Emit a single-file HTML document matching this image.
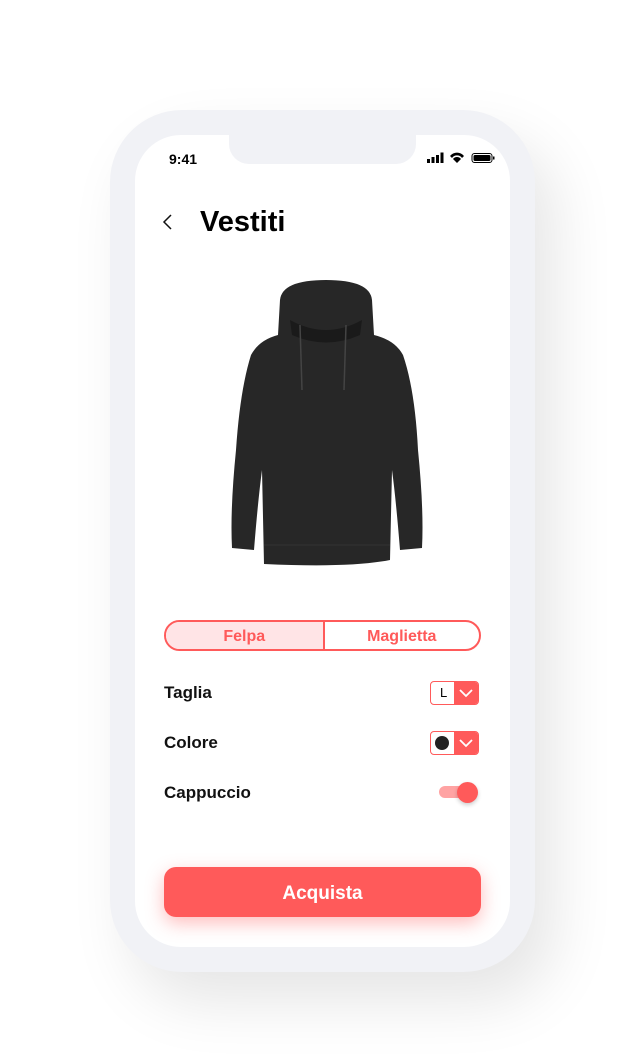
<!DOCTYPE html>
<html><head><style>
body{margin:0;width:625px;height:1062px;background:#fff;position:relative;overflow:hidden;font-family:"Liberation Sans",sans-serif}
.outer{position:absolute;left:110px;top:110px;width:425px;height:862px;border-radius:72px;background:#f1f2f6;box-shadow:20px 30px 60px rgba(0,0,0,0.10)}
.screen{position:absolute;left:135px;top:135px;width:375px;height:812px;border-radius:46px;background:#fff;overflow:hidden}
.notch{position:absolute;left:94px;top:0;width:187px;height:29px;background:#f1f2f6;border-radius:0 0 20px 20px}
.abs{position:absolute}
.lbl{position:absolute;left:29px;font-weight:bold;font-size:17px;color:#111}
.sel{position:absolute;left:295px;width:49px;height:24px;border:1.5px solid #ff5a5a;border-radius:4px;box-sizing:border-box;overflow:hidden}
.sel .r{position:absolute;right:0;top:0;width:24px;height:100%;background:#ff5a5a}
</style></head><body>
<div class="outer"></div>
<div class="screen">
<div class="notch"></div>
<div class="abs" style="left:34px;top:16px;font-size:14px;font-weight:bold">9:41</div>
<svg class="abs" style="left:292px;top:17px" width="70" height="12">
<rect x="0" y="7" width="3" height="4" fill="#000"/><rect x="4.5" y="5" width="3" height="6" fill="#000"/><rect x="9" y="3" width="3" height="8" fill="#000"/><rect x="13.5" y="0.5" width="3" height="10.5" fill="#000"/>
<path d="M23 4 A9 9 0 0 1 37 4 L35 6 A6 6 0 0 0 25 6Z M26 7 A5 5 0 0 1 34 7 L30 11Z" fill="#000"/>
<rect x="45" y="1.5" width="20" height="9" rx="2.5" fill="none" stroke="#000" stroke-width="1"/><rect x="46.5" y="3" width="17" height="6" rx="1.5" fill="#000"/><rect x="66" y="4.5" width="1.5" height="3" fill="#000"/>
</svg>
<svg class="abs" style="left:27px;top:78px" width="12" height="18"><path d="M9 2 L2 9 L9 16" fill="none" stroke="#111" stroke-width="1.5"/></svg>
<div class="abs" style="left:65px;top:71px;font-size:29px;font-weight:bold;color:#000">Vestiti</div>
<svg class="abs" style="left:85px;top:145px" width="214" height="290" viewBox="0 0 214 290" preserveAspectRatio="none">
<path d="M60 20 Q62 0 106 0 Q150 0 152 20 L154 55 Q175 60 183 75 Q195 110 198 170 Q204 230 202 268 L180 270 Q176 220 172 190 L170 280 Q130 288 44 284 L42 190 Q38 220 34 270 L12 268 Q10 230 16 170 Q20 110 31 75 Q39 60 58 55Z" fill="#272727"/>
<path d="M70 40 Q106 60 142 40 L140 55 Q106 70 72 55Z" fill="#1a1a1a"/>
<path d="M80 45 L82 110 M126 45 L124 110" stroke="#444" stroke-width="1.5"/>
<path d="M44 265 L170 265" stroke="#333" stroke-width="1"/>
</svg>
<div class="abs" style="left:29px;top:485px;width:317px;height:31px;border:2.5px solid #ff5a5a;border-radius:16px;box-sizing:border-box;overflow:hidden;display:flex;font-weight:bold;font-size:16px;color:#ff5a5a">
<div style="width:50%;background:#ffe4e6;border-right:2.5px solid #ff5a5a;text-align:center;line-height:29px">Felpa</div>
<div style="flex:1;text-align:center;line-height:29px">Maglietta</div></div>
<div class="lbl" style="top:548px">Taglia</div>
<div class="sel" style="top:546px"><span class="abs" style="left:9px;top:3px;font-size:13px">L</span><div class="r"><svg width="24" height="21"><path d="M6 8 L12 14 L18 8" fill="none" stroke="#fff" stroke-width="1.8"/></svg></div></div>
<div class="lbl" style="top:598px">Colore</div>
<div class="sel" style="top:596px"><span class="abs" style="left:4px;top:4px;width:14px;height:14px;border-radius:50%;background:#222"></span><div class="r"><svg width="24" height="21"><path d="M6 8 L12 14 L18 8" fill="none" stroke="#fff" stroke-width="1.8"/></svg></div></div>
<div class="lbl" style="top:648px">Cappuccio</div>
<div class="abs" style="left:304px;top:651px;width:36px;height:12px;border-radius:6px;background:#ffa3a3"></div>
<div class="abs" style="left:322px;top:647px;width:21px;height:21px;border-radius:50%;background:#ff5a5a;box-shadow:0 2px 4px rgba(0,0,0,0.2)"></div>
<div class="abs" style="left:29px;top:732px;width:317px;height:50px;border-radius:12px;background:#ff5a5a;box-shadow:0 6px 18px rgba(255,90,90,0.4);color:#fff;font-weight:bold;font-size:19px;text-align:center;line-height:54px">Acquista</div>
</div>
</body></html>
